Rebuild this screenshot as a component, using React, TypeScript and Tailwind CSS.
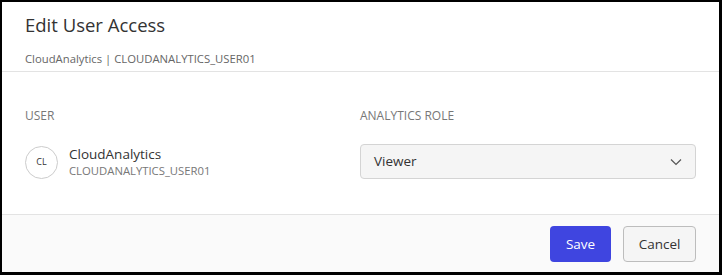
import React from "react";

export default function App() {
  return (
    <div
      className="w-[722px] h-[275px] bg-white border-l-2 border-t-2 border-r-[3px] border-b-[3px] border-black flex flex-col box-border overflow-hidden"
      style={{ fontFamily: '"Open Sans", "Noto Sans", sans-serif' }}
    >
      <div className="px-[23px] pt-[10px] h-[70px] border-b border-[#e3e3e3] box-border">
        <div className="text-[18.5px] leading-[26px] text-[#333]">Edit User Access</div>
        <div className="text-[11.3px] leading-[16px] text-[#666] mt-[13px]">CloudAnalytics | CLOUDANALYTICS_USER01</div>
      </div>
      <div className="flex px-[23px] pt-[35px] h-[142px] box-border">
        <div className="w-[336px]">
          <div className="text-[12px] leading-[18px] text-[#777] uppercase">User</div>
          <div className="flex items-center gap-[11px] mt-[20px]">
            <div className="w-[33px] h-[33px] rounded-full border border-[#ccc] flex items-center justify-center text-[9px] text-[#333]">
              CL
            </div>
            <div className="flex flex-col">
              <span className="text-[13.5px] leading-[18px] text-[#333]">CloudAnalytics</span>
              <span className="text-[11.3px] leading-[16px] text-[#777]">CLOUDANALYTICS_USER01</span>
            </div>
          </div>
        </div>
        <div className="flex-1">
          <div className="text-[12px] leading-[18px] text-[#777] uppercase">Analytics Role</div>
          <div className="mt-[19px] w-[336px] h-[35px] rounded-[4px] border border-[#d4d4d4] bg-[#f5f5f5] flex items-center justify-between pl-[13px] pr-[12px] box-border">
            <span className="text-[13.5px] text-[#333]">Viewer</span>
            <svg width="14" height="14" viewBox="0 0 14 14" fill="none" stroke="#555" strokeWidth="1.2">
              <path d="M2 4.5 L7 9.5 L12 4.5" />
            </svg>
          </div>
        </div>
      </div>
      <div className="flex-1 bg-[#fafafa] border-t border-[#e3e3e3] flex items-center justify-end gap-[12px] pr-[23px] pt-[1px]">
        <button className="w-[61px] h-[36px] rounded-[4px] bg-[#3f45e0] text-white text-[13.5px]">Save</button>
        <button className="w-[73px] h-[36px] rounded-[4px] bg-[#f5f5f5] border border-[#bdbdbd] text-[#333] text-[13.5px]">Cancel</button>
      </div>
    </div>
  );
}
